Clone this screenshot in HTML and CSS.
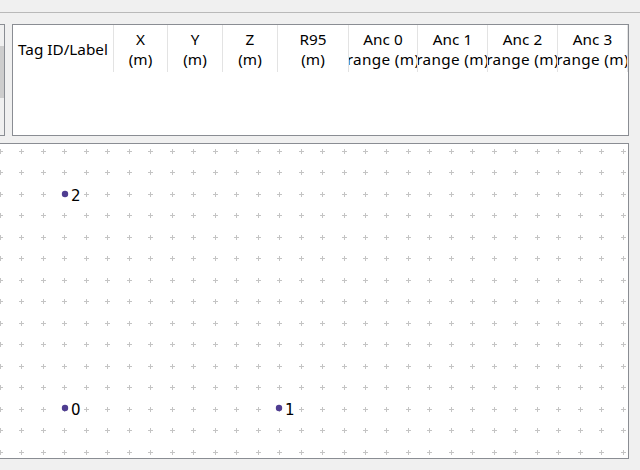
FILE: index.html
```
<!DOCTYPE html>
<html>
<head>
<meta charset="utf-8">
<link rel="stylesheet" href="styles.css">
</head>
<body>
<div class="app">
  <div class="toolbar-strip"></div>
  <div class="top-row">
    <div class="side-panel"><div class="side-scroll"></div></div>
    <div class="table-box">
      <div class="header">
        <div class="hcell c0"><span>Tag ID/Label</span></div>
        <div class="hcell c1"><span>X<br>(m)</span></div>
        <div class="hcell c2"><span>Y<br>(m)</span></div>
        <div class="hcell c3"><span>Z<br>(m)</span></div>
        <div class="hcell c4"><span>R95<br>(m)</span></div>
        <div class="hcell c5 anc"><span>Anc 0<br><i>range (m)</i></span></div>
        <div class="hcell c6 anc"><span>Anc 1<br><i>range (m)</i></span></div>
        <div class="hcell c7 anc"><span>Anc 2<br><i>range (m)</i></span></div>
        <div class="hcell c8 anc"><span>Anc 3<br><i>range (m)</i></span></div>
      </div>
    </div>
  </div>
  <div class="canvas-box">
    <svg class="plot" width="647" height="314" viewBox="-19 144 647 314">
      <rect x="-19" y="144" width="647" height="314" fill="#fff"/>
      <g id="cross-layer" stroke="#c4c4c4" stroke-width="1" fill="none"></g>
      <g class="anchors" fill="#4f3d91">
        <circle cx="65" cy="194" r="3.2"/>
        <circle cx="65" cy="408" r="3.2"/>
        <circle cx="279" cy="408" r="3.2"/>
      </g>
      <g class="labels">
        <text x="71" y="201">2</text>
        <text x="71" y="415">0</text>
        <text x="285" y="415">1</text>
      </g>
    </svg>
  </div>
</div>
<script src="plot.js"></script>
</body>
</html>
```
FILE: plot.js
```
(function () {
  var layer = document.getElementById('cross-layer');
  var ns = 'http://www.w3.org/2000/svg';
  var step = 21.47;
  var d = '';
  for (var i = 0; i < 30; i++) {
    var x = Math.round(0 + i * step) + 0.5;
    if (x > 627) break;
    for (var j = 0; j < 15; j++) {
      var y = Math.round(151 + j * step) + 0.5;
      if (y > 456) break;
      d += 'M' + (x - 2.5) + ' ' + y + 'H' + (x + 2.5) + 'M' + x + ' ' + (y - 2.5) + 'V' + (y + 2.5);
    }
  }
  var p = document.createElementNS(ns, 'path');
  p.setAttribute('d', d);
  layer.appendChild(p);
})();
```
FILE: styles.css
```
html, body {
  margin: 0;
  padding: 0;
  background: #f0f0f0;
  width: 640px;
  height: 470px;
  overflow: hidden;
}
.app {
  font-family: "Noto Sans", "Open Sans", sans-serif;
  color: #000;
}
.toolbar-strip {
  height: 12px;
  border-bottom: 1px solid #b9b9b9;
}
.top-row {
  display: flex;
  margin-top: 11px;
  margin-left: -40px;
  height: 112px;
}
.side-panel {
  width: 45px;
  box-sizing: border-box;
  border: 1px solid #8a8d93;
  display: flex;
  justify-content: flex-end;
  align-items: flex-start;
  padding-top: 21px;
}
.side-scroll {
  width: 4px;
  height: 52px;
  background: #cdcdcd;
}
.table-box {
  margin-left: 7px;
  width: 617px;
  box-sizing: border-box;
  border: 1px solid #8a8d93;
  background: #fff;
  overflow: hidden;
}
.header {
  display: flex;
  height: 47px;
}
.hcell {
  box-sizing: border-box;
  border-right: 1px solid #e3e3e3;
  display: flex;
  justify-content: center;
  align-items: center;
  overflow: hidden;
  font-size: 15.3px;
  line-height: 20px;
  text-align: center;
  white-space: nowrap;
}
.hcell span { flex: none; }
.anc i {
  font-style: normal;
  letter-spacing: 0.35px;
}
.c0 { width: 101px; }
.c1 { width: 54px; }
.c2 { width: 55px; }
.c3 { width: 55px; }
.c4 { width: 71px; }
.c5 { width: 69px; }
.c6 { width: 70px; }
.c7 { width: 70px; }
.c8 { width: 70px; }
.canvas-box {
  margin-top: 7px;
  margin-left: -20px;
  width: 649px;
  height: 316px;
  box-sizing: border-box;
  border: 1px solid #8a8d93;
  background: #fff;
}
.plot { display: block; }
.labels text {
  font-family: "DejaVu Sans", sans-serif;
  font-size: 15px;
  fill: #000;
}
```
